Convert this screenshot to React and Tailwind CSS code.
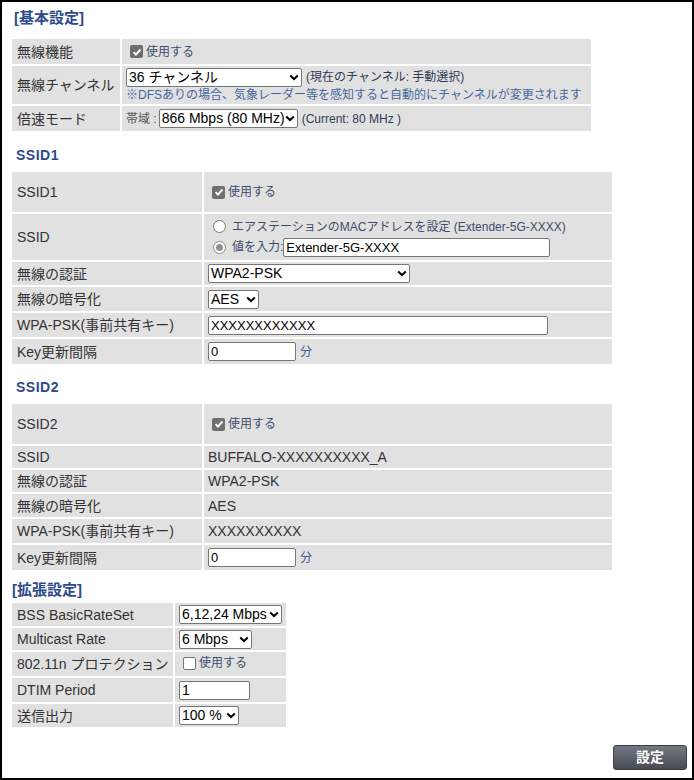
import React from 'react';

const Select = ({ value, className }) => (
  <span className={`relative inline-block align-middle ${className}`}>
    <select
      defaultValue={value}
      className="w-full h-full appearance-none bg-white border border-[#767676] rounded-[2px] pl-[2px] pr-[12px] text-[14px] leading-[17px] text-black outline-none"
    >
      <option>{value}</option>
    </select>
    <svg className="pointer-events-none absolute right-[3px] top-[6px]" width="10" height="7" viewBox="0 0 10 7">
      <path d="M1.2 1.5l3.8 3.6 3.8-3.6" stroke="#000" strokeWidth="2" fill="none" />
    </svg>
  </span>
);

const Input = ({ value, className }) => (
  <input
    defaultValue={value}
    className={`h-[19px] bg-white border border-[#767676] rounded-[2px] px-[2px] text-[13px] text-black outline-none align-middle ${className}`}
  />
);

const Check = ({ checked }) =>
  checked ? (
    <span className="inline-flex w-[13px] h-[13px] items-center justify-center rounded-[2px] bg-[#6e6e6e] shrink-0">
      <svg width="10" height="10" viewBox="0 0 10 10">
        <path d="M1.6 5.2l2.3 2.4 4.6-5.1" stroke="#fff" strokeWidth="1.9" fill="none" />
      </svg>
    </span>
  ) : (
    <span className="inline-block w-[13px] h-[13px] rounded-[2px] border border-[#767676] bg-white shrink-0" />
  );

const UseCheck = ({ checked }) => (
  <span className="inline-flex items-center gap-[3px] ml-[4px] text-[12px] text-[#3d4c6b]">
    <Check checked={checked} />
    使用する
  </span>
);

const Radio = ({ checked }) =>
  checked ? (
    <span className="inline-flex w-[13px] h-[13px] items-center justify-center rounded-full border border-[#8a8a8a] bg-white shrink-0">
      <span className="w-[7px] h-[7px] rounded-full bg-[#8f8f8f]" />
    </span>
  ) : (
    <span className="inline-block w-[13px] h-[13px] rounded-full border border-[#767676] bg-white shrink-0" />
  );

const Label = ({ children, className = '' }) => (
  <td className={`bg-[#e1e1e1] pl-[5px] text-[14px] leading-[18px] text-[#333] whitespace-nowrap ${className}`}>{children}</td>
);

const Value = ({ children, className = '' }) => (
  <td className={`bg-[#e1e1e1] pl-[4px] text-[14px] leading-[18px] text-[#333] ${className}`}>{children}</td>
);

const App = () => {
  return (
    <div className="w-[694px] h-[780px] border-2 border-black bg-white pl-[8px] pr-[5px] pt-[6px] font-['Liberation_Sans','Noto_Sans_CJK_JP',sans-serif] text-[#333]">
      {/* 基本設定 */}
      <h2 className="ml-[4px] text-[15px] leading-[20px] font-bold text-[#2c4a8c]">[基本設定]</h2>
      <table className="mt-[9px] w-[583px] border-separate border-spacing-[2px]">
        <tbody>
          <tr>
            <Label className="w-[108px] h-[25px]">無線機能</Label>
            <Value>
              <UseCheck checked />
            </Value>
          </tr>
          <tr>
            <Label className="h-[38px]">無線チャンネル</Label>
            <Value>
              <div className="flex items-center gap-[4px]">
                <Select value="36 チャンネル" className="w-[176px] h-[19px]" />
                <span className="text-[12px] text-[#2f3b57]">(現在のチャンネル: 手動選択)</span>
              </div>
              <div className="text-[12px] leading-[15px] mt-[1px] text-[#4466a0]">
                ※DFSありの場合、気象レーダー等を感知すると自動的にチャンネルが変更されます
              </div>
            </Value>
          </tr>
          <tr>
            <Label className="h-[25px]">倍速モード</Label>
            <Value>
              <div className="flex items-center">
                <span className="text-[12px] text-[#555] mr-[2px]">帯域 :</span>
                <Select value="866 Mbps (80 MHz)" className="w-[139px] h-[19px]" />
                <span className="ml-[4px] text-[12px] text-[#2f3b57]">(Current: 80 MHz )</span>
              </div>
            </Value>
          </tr>
        </tbody>
      </table>

      {/* SSID1 */}
      <h3 className="mt-[12px] ml-[6px] text-[14px] leading-[20px] font-bold tracking-[0.5px] text-[#2c4a8c]">SSID1</h3>
      <table className="mt-[5px] w-[604px] border-separate border-spacing-[2px]">
        <tbody>
          <tr>
            <Label className="w-[190px] h-[40px]">SSID1</Label>
            <Value>
              <UseCheck checked />
            </Value>
          </tr>
          <tr>
            <Label className="h-[46px]">SSID</Label>
            <Value>
              <div className="flex items-center gap-[6px] ml-[5px] text-[12px] text-[#3d4c6b]">
                <Radio />
                <span>エアステーションのMACアドレスを設定 (Extender-5G-XXXX)</span>
              </div>
              <div className="flex items-center mt-[2px] ml-[5px] text-[12px] text-[#3d4c6b]">
                <Radio checked />
                <span className="ml-[6px]">値を入力:</span>
                <Input value="Extender-5G-XXXX" className="w-[267px]" />
              </div>
            </Value>
          </tr>
          <tr>
            <Label className="h-[23px]">無線の認証</Label>
            <Value>
              <Select value="WPA2-PSK" className="w-[202px] h-[19px]" />
            </Value>
          </tr>
          <tr>
            <Label className="h-[24px]">無線の暗号化</Label>
            <Value>
              <Select value="AES" className="w-[51px] h-[19px]" />
            </Value>
          </tr>
          <tr>
            <Label className="h-[24px]">WPA-PSK(事前共有キー)</Label>
            <Value>
              <Input value="XXXXXXXXXXXX" className="w-[340px]" />
            </Value>
          </tr>
          <tr>
            <Label className="h-[25px]">Key更新間隔</Label>
            <Value>
              <Input value="0" className="w-[88px]" />
              <span className="ml-[4px] text-[12px] text-[#3d5a90] align-middle">分</span>
            </Value>
          </tr>
        </tbody>
      </table>

      {/* SSID2 */}
      <h3 className="mt-[11px] ml-[6px] text-[14px] leading-[20px] font-bold tracking-[0.5px] text-[#2c4a8c]">SSID2</h3>
      <table className="mt-[5px] w-[604px] border-separate border-spacing-[2px]">
        <tbody>
          <tr>
            <Label className="w-[190px] h-[40px]">SSID2</Label>
            <Value>
              <UseCheck checked />
            </Value>
          </tr>
          <tr>
            <Label className="h-[22px]">SSID</Label>
            <Value>BUFFALO-XXXXXXXXXX_A</Value>
          </tr>
          <tr>
            <Label className="h-[22px]">無線の認証</Label>
            <Value>WPA2-PSK</Value>
          </tr>
          <tr>
            <Label className="h-[23px]">無線の暗号化</Label>
            <Value>AES</Value>
          </tr>
          <tr>
            <Label className="h-[24px]">WPA-PSK(事前共有キー)</Label>
            <Value>XXXXXXXXXX</Value>
          </tr>
          <tr>
            <Label className="h-[25px]">Key更新間隔</Label>
            <Value>
              <Input value="0" className="w-[88px]" />
              <span className="ml-[4px] text-[12px] text-[#3d5a90] align-middle">分</span>
            </Value>
          </tr>
        </tbody>
      </table>

      {/* 拡張設定 */}
      <h2 className="mt-[8px] ml-[2px] text-[15px] leading-[20px] font-bold text-[#2c4a8c]">[拡張設定]</h2>
      <table className="mt-[1px] w-[278px] border-separate border-spacing-[2px]">
        <tbody>
          <tr>
            <Label className="w-[161px] h-[23px]">BSS BasicRateSet</Label>
            <Value>
              <Select value="6,12,24 Mbps" className="w-[103px] h-[19px]" />
            </Value>
          </tr>
          <tr>
            <Label className="h-[22px]">Multicast Rate</Label>
            <Value>
              <Select value="6 Mbps" className="w-[73px] h-[19px]" />
            </Value>
          </tr>
          <tr>
            <Label className="h-[24px]">802.11n プロテクション</Label>
            <Value>
              <UseCheck />
            </Value>
          </tr>
          <tr>
            <Label className="h-[24px]">DTIM Period</Label>
            <Value>
              <Input value="1" className="w-[71px] text-[14px]" />
            </Value>
          </tr>
          <tr>
            <Label className="h-[23px]">送信出力</Label>
            <Value>
              <Select value="100 %" className="w-[60px] h-[19px]" />
            </Value>
          </tr>
        </tbody>
      </table>

      <div className="flex justify-end mt-[16px]">
        <button className="w-[74px] h-[25px] rounded-[3px] border border-[#3a3d42] bg-linear-to-b from-[#737983] to-[#464b53] text-[14px] font-bold text-white">
          設定
        </button>
      </div>
    </div>
  );
};

export default App;
